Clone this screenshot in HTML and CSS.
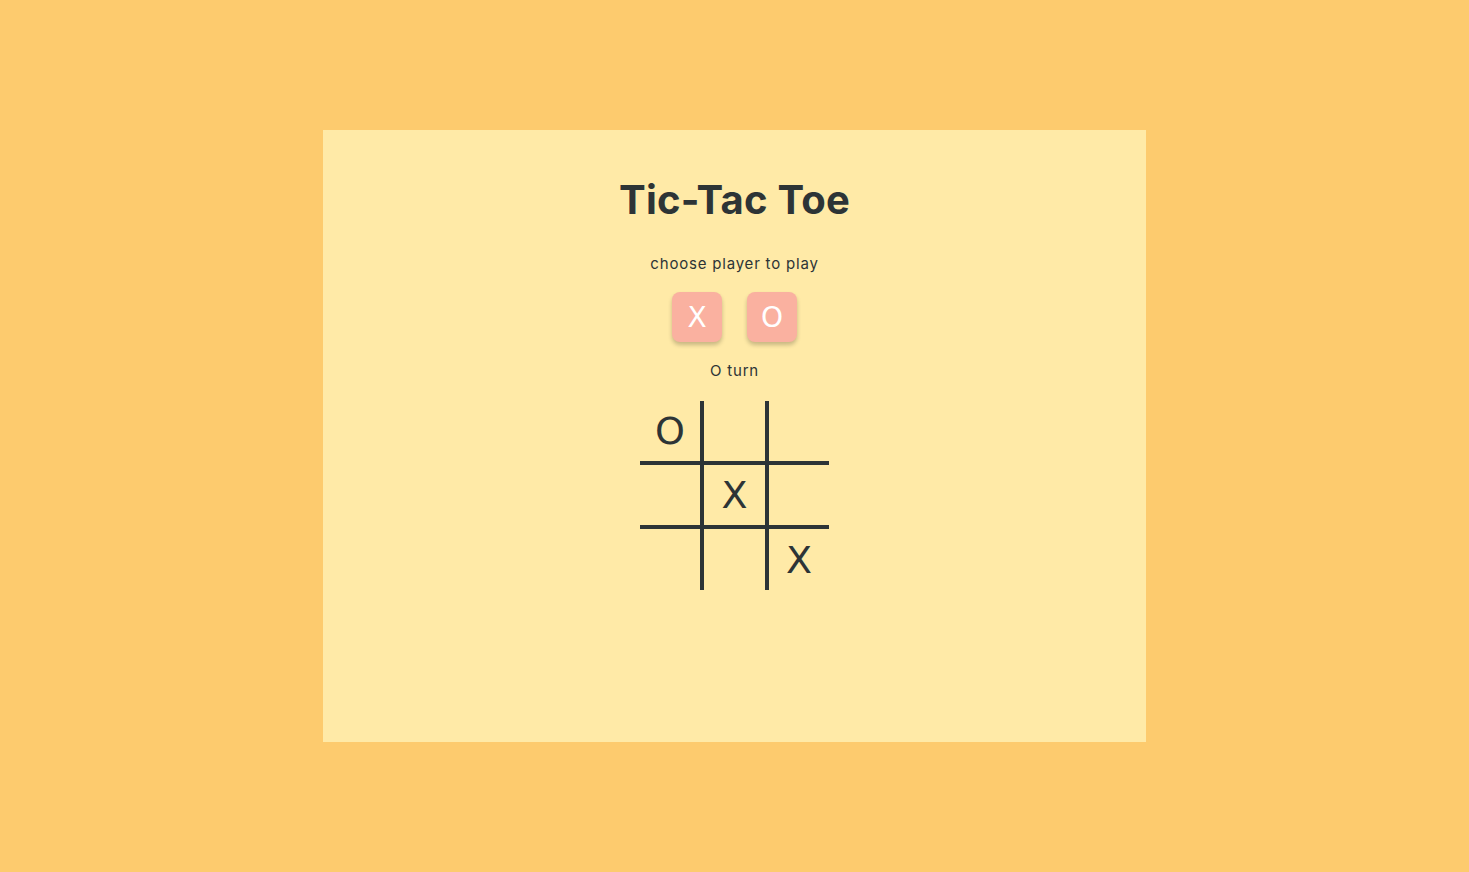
FILE: index.html
```html
<!DOCTYPE html>
<html>
<head>
<meta charset="utf-8">
<link rel="stylesheet" href="styles.css">
</head>
<body>
<main class="card">
  <h1 class="title">Tic-Tac Toe</h1>
  <p class="hint">choose player to play</p>
  <div class="players">
    <button class="player">X</button>
    <button class="player">O</button>
  </div>
  <p class="turn">O turn</p>
  <div class="board">
    <div class="cell c-r c-b">O</div>
    <div class="cell c-r c-b"></div>
    <div class="cell c-b"></div>
    <div class="cell c-r c-b"></div>
    <div class="cell c-r c-b">X</div>
    <div class="cell c-b"></div>
    <div class="cell c-r"></div>
    <div class="cell c-r"></div>
    <div class="cell">X</div>
  </div>
</main>
</body>
</html>
```
FILE: styles.css
```css
html, body {
  margin: 0;
  padding: 0;
}
body {
  background: #fdcb6e;
  height: 872px;
  display: flex;
  justify-content: center;
  font-family: Inter, "Open Sans", sans-serif;
  color: #2d3436;
}
.card {
  margin-top: 130px;
  width: 823px;
  height: 612px;
  background: #ffeaa7;
  display: flex;
  flex-direction: column;
  align-items: center;
  box-sizing: border-box;
  padding-top: 46px;
}
.title {
  margin: 0;
  font-size: 40px;
  font-weight: 700;
  line-height: 48px;
  letter-spacing: 0.2px;
}
.hint, .turn {
  margin: 0;
  font-size: 15px;
  line-height: 20px;
  letter-spacing: 0.8px;
}
.hint {
  margin-top: 30px;
}
.players {
  display: flex;
  gap: 25px;
  margin-top: 18px;
}
.player {
  width: 50px;
  height: 50px;
  border: none;
  border-radius: 8px;
  background: #fab1a0;
  color: #fff;
  font-family: "DejaVu Sans", sans-serif;
  font-size: 28px;
  box-shadow: 0 3px 4px rgba(0,0,0,0.22);
  padding: 0;
}
.turn {
  margin-top: 19px;
}
.board {
  margin-top: 20px;
  display: grid;
  grid-template-columns: 64px 65px 60px;
  grid-template-rows: 64px 64px 61px;
}
.cell {
  display: flex;
  align-items: center;
  justify-content: center;
  font-size: 38px;
  font-family: "DejaVu Sans", sans-serif;
}
.c-r { border-right: 4px solid #2d3436; }
.c-b { border-bottom: 4px solid #2d3436; }
```
